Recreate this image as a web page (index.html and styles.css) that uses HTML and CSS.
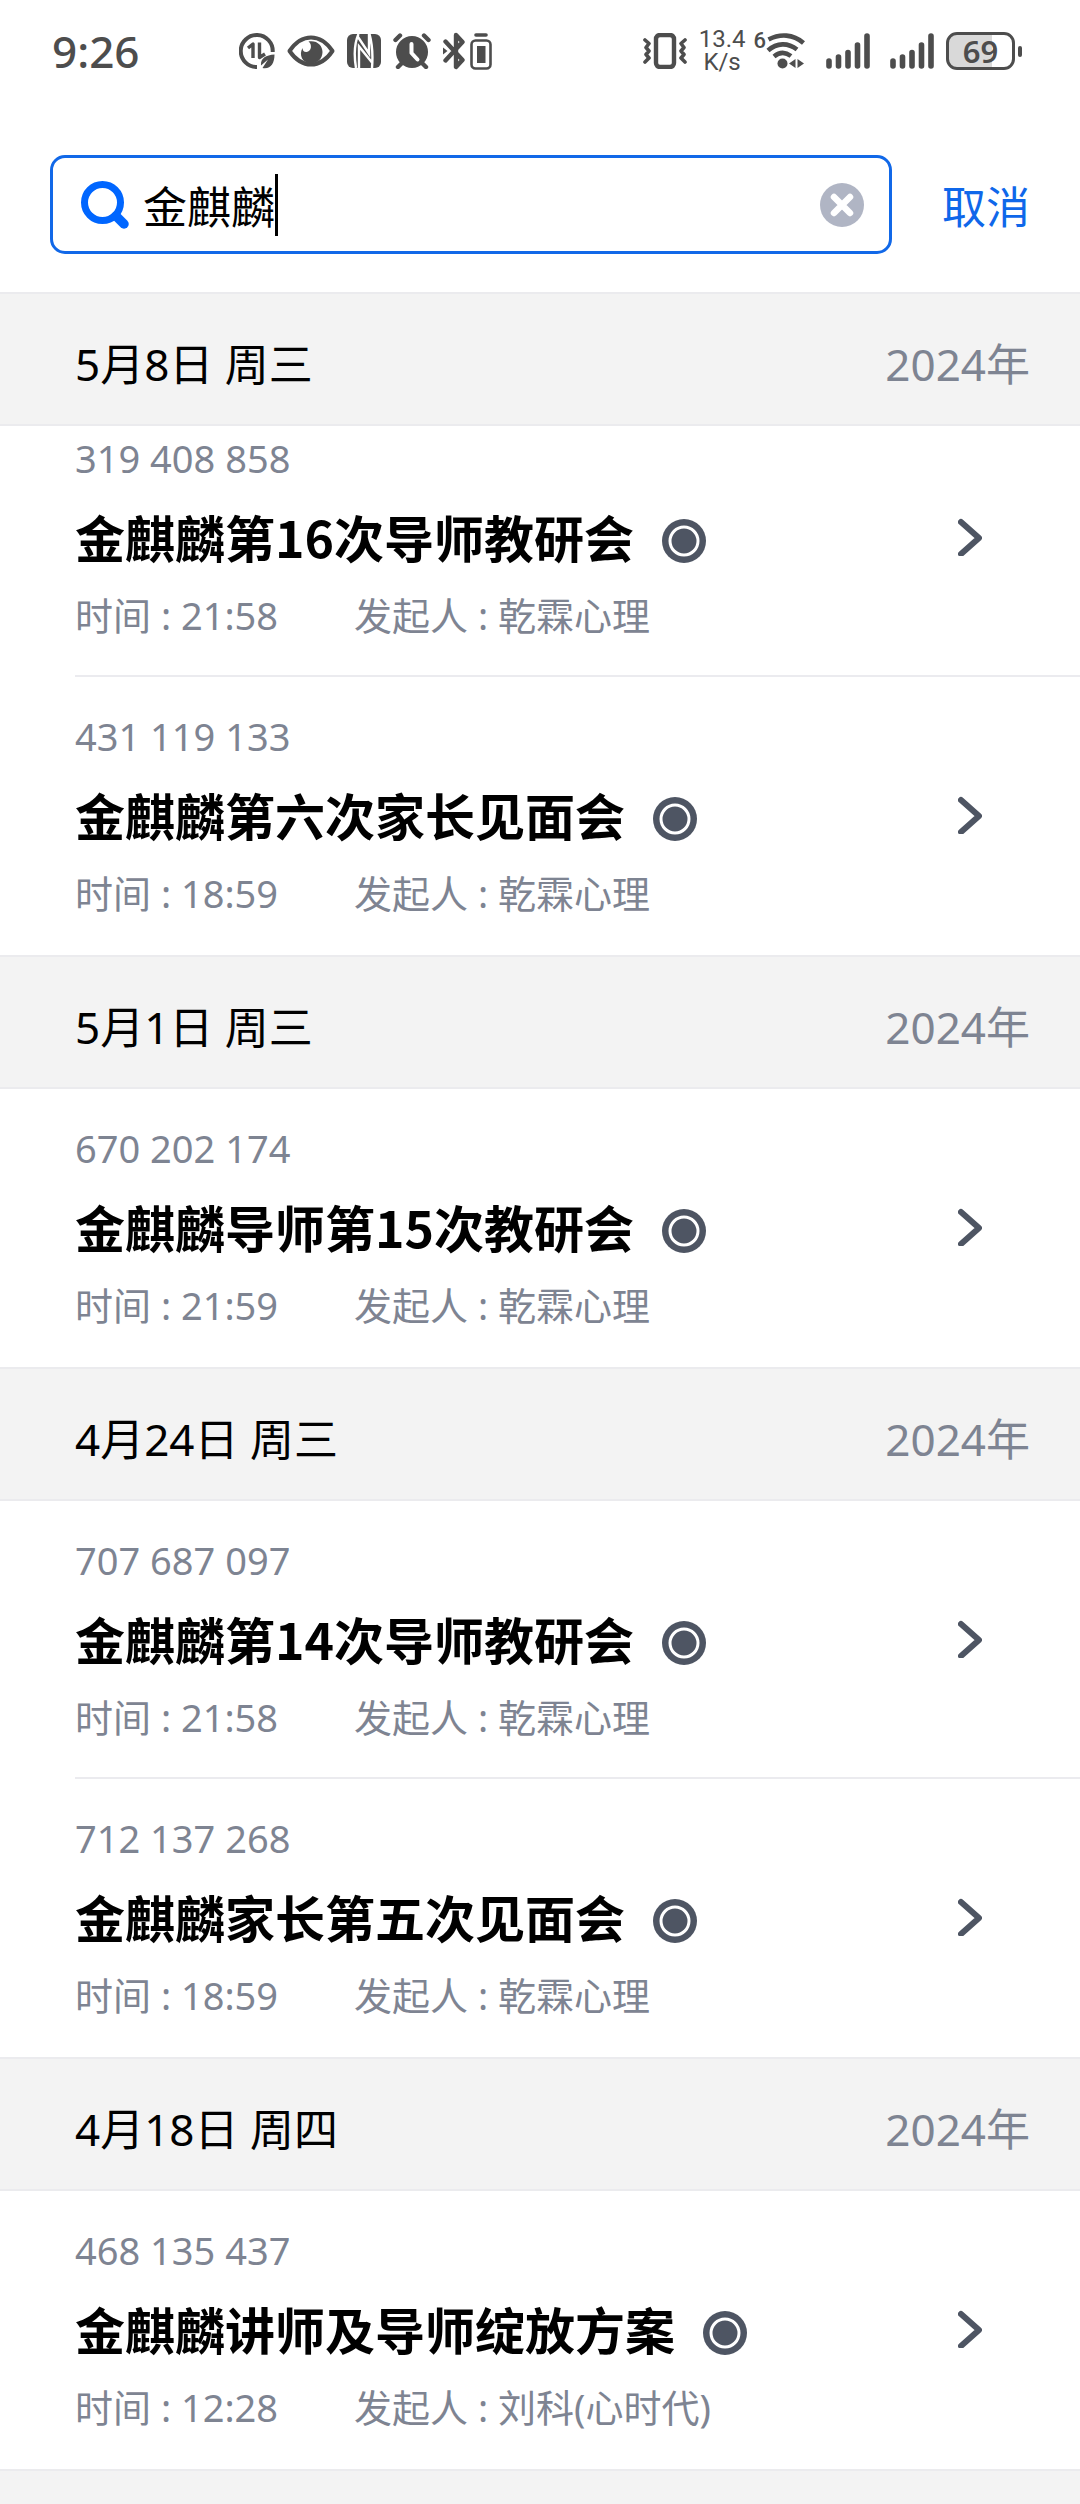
FILE: index.html
```html
<!DOCTYPE html>
<html lang="zh-CN">
<head>
    <meta charset="UTF-8">
    <meta name="viewport" content="width=device-width, initial-scale=1">
    <title>搜索会议</title>
    <link rel="stylesheet" href="styles.css">
</head>
<body>
    <!-- shared icons -->
    <svg class="sprite" aria-hidden="true">
        <symbol id="icon-signal" viewBox="0 0 44 36">
            <path d="M3 28v5M12.500 24v9M22 19.500v13.500M31.500 12v21M41 3v30" fill="none" stroke="currentColor" stroke-width="5.600" stroke-linecap="round"/>
        </symbol>
        <symbol id="icon-record" viewBox="0 0 44 44">
            <circle cx="22" cy="22" r="22" fill="currentColor"/>
            <circle cx="22" cy="22" r="14" fill="none" stroke="#fff" stroke-width="3"/>
        </symbol>
        <symbol id="icon-chevron" viewBox="0 0 24 38">
            <path d="M3 4l18 16L3 36" fill="none" stroke="currentColor" stroke-width="6" stroke-linecap="round" stroke-linejoin="round"/>
        </symbol>
    </svg>

    <div class="status-bar">
        <div class="status-left">
            <span class="clock">9:26</span>
            <!-- data saver -->
            <svg width="36" height="36" viewBox="0 0 36 36">
                <path d="M33.700 19A16 16 0 1 0 18 34" fill="none" stroke="currentColor" stroke-width="4"/>
                <path d="M9 15l5-4v14M20.500 9.500v15l5.500-3.500" fill="none" stroke="currentColor" stroke-width="3.400" stroke-linejoin="round"/>
                <path d="M35.500 21.500c-9 .5-14 4-13.500 11l7-6-5.500 8.500c8 1.500 12-4.500 12-13.500z" fill="currentColor"/>
            </svg>
            <!-- eye comfort -->
            <svg width="48" height="32" viewBox="0 0 48 32">
                <path d="M2.500 16C8 8 15 2.500 24 2.500S40 8 45.500 16C40 24 33 29.500 24 29.500S8 24 2.500 16z" fill="none" stroke="currentColor" stroke-width="4" stroke-linejoin="round"/>
                <path d="M21.500 6.500c4 3 3 10-2 10.500-2.500.2-4-1.500-4-4-4 7 0 15 8 15.500 7 .2 12-5 12-11.500S30 5 21.500 6.500z" fill="currentColor"/>
            </svg>
            <!-- NFC -->
            <svg width="34" height="34" viewBox="0 0 34 34">
                <rect width="34" height="34" rx="6" fill="currentColor"/>
                <path d="M11.500 0C7.500 9 7 22 9 34M12 34V12.500l13 16M22 0v19.500L11 3M22.500 0c2.500 9 3.500 22 2.500 34" fill="none" stroke="#fff" stroke-width="2.400"/>
            </svg>
            <!-- alarm -->
            <svg width="38" height="36" viewBox="0 0 38 36">
                <circle cx="19" cy="19" r="16" fill="currentColor"/>
                <path d="M2.500 7L7 2.500M35.500 7L31 2.500M9 30l-4 4M29 30l4 4" stroke="currentColor" stroke-width="4.400" stroke-linecap="round"/>
                <path d="M18.500 11v9l6 6.500" fill="none" stroke="#fff" stroke-width="4" stroke-linecap="round" stroke-linejoin="round"/>
            </svg>
            <!-- bluetooth with device battery -->
            <svg width="50" height="38" viewBox="0 0 50 38">
                <path d="M2.500 9.500l17 18.500-6.500 7v-32l6.500 7-17 18.500" fill="none" stroke="currentColor" stroke-width="4.400" stroke-linecap="round" stroke-linejoin="round"/>
                <path d="M0 15.500l4.500 3.500L0 22.500z" fill="currentColor"/>
                <rect x="28.500" y="8.500" width="19" height="28" rx="4" fill="none" stroke="currentColor" stroke-width="2.600"/>
                <rect x="34" y="14" width="8.500" height="17" fill="currentColor"/>
                <path d="M33 3h10" stroke="currentColor" stroke-width="3.600" stroke-linecap="round"/>
            </svg>
        </div>
        <div class="status-right">
            <!-- vibrate -->
            <svg width="44" height="36" viewBox="0 0 44 36">
                <rect x="13" y="2" width="18" height="32" rx="4" fill="none" stroke="currentColor" stroke-width="4.400"/>
                <path d="M2 7l4 3.500-3 4L6 18l-3 3.500L6 25l-4 4M42 7l-4 3.500 3 4-3 3.500 3 3.500-3 3.500 4 4" fill="none" stroke="currentColor" stroke-width="3.600" stroke-linecap="round" stroke-linejoin="round"/>
            </svg>
            <div class="net-speed">
                <div>13.4</div>
                <div>K/s</div>
            </div>
            <div class="wifi">
                <span class="wifi-gen">6</span>
                <svg width="40" height="36" viewBox="0 0 40 36">
                    <path d="M2.500 6.500C14 .5 27 1 37.500 10M2 17.500c9-8 20-8 29-1M8 23.500c5.500-4.500 11.500-4.500 17-.5" fill="none" stroke="currentColor" stroke-width="4.600"/>
                    <circle cx="16.500" cy="30.500" r="5" fill="currentColor"/>
                    <path d="M29.500 26v9l-6.500-4.500zM31.500 26v9l6.500-4.500z" fill="currentColor"/>
                </svg>
            </div>
            <svg class="signal" width="44" height="36"><use href="#icon-signal"/></svg>
            <svg class="signal" width="44" height="36"><use href="#icon-signal"/></svg>
            <div class="battery"><span class="battery-body">69</span></div>
        </div>
    </div>

    <form class="search-bar" role="search">
        <div class="search-box">
            <svg width="48" height="48" viewBox="0 0 48 48" aria-hidden="true">
                <circle cx="21.500" cy="21.500" r="18" fill="none" stroke="currentColor" stroke-width="7"/>
                <path d="M35 35l8 8" stroke="currentColor" stroke-width="9.500" stroke-linecap="round"/>
            </svg>
            <div class="search-field">
                <input type="text" class="search-input" aria-label="搜索" value="金麒麟">
                <span class="caret"></span>
            </div>
            <button type="reset" class="clear" aria-label="清除">
                <svg width="44" height="44" viewBox="0 0 44 44">
                    <circle cx="22" cy="22" r="22" fill="currentColor"/>
                    <path d="M14 14l16 16M30 14L14 30" stroke="#fff" stroke-width="6.500" stroke-linecap="round"/>
                </svg>
            </button>
        </div>
        <button type="button" class="cancel">取消</button>
    </form>

    <main class="results">
        <section>
            <h2 class="day-header"><span>5月8日 周三</span><span class="year">2024年</span></h2>
            <ul class="meetings scrolled">
                <li>
                    <a href="#319408858" class="meeting">
                        <div class="info">
                            <div class="number">319 408 858</div>
                            <div class="title">金麒麟第16次导师教研会<svg class="record" width="44" height="44"><use href="#icon-record"/></svg></div>
                            <div class="meta"><span>时间 : 21:58</span><span>发起人 : 乾霖心理</span></div>
                        </div>
                        <svg class="chevron" width="24" height="38"><use href="#icon-chevron"/></svg>
                    </a>
                </li>
                <li>
                    <a href="#431119133" class="meeting">
                        <div class="info">
                            <div class="number">431 119 133</div>
                            <div class="title">金麒麟第六次家长见面会<svg class="record" width="44" height="44"><use href="#icon-record"/></svg></div>
                            <div class="meta"><span>时间 : 18:59</span><span>发起人 : 乾霖心理</span></div>
                        </div>
                        <svg class="chevron" width="24" height="38"><use href="#icon-chevron"/></svg>
                    </a>
                </li>
            </ul>
        </section>

        <section>
            <h2 class="day-header"><span>5月1日 周三</span><span class="year">2024年</span></h2>
            <ul class="meetings">
                <li>
                    <a href="#670202174" class="meeting">
                        <div class="info">
                            <div class="number">670 202 174</div>
                            <div class="title">金麒麟导师第15次教研会<svg class="record" width="44" height="44"><use href="#icon-record"/></svg></div>
                            <div class="meta"><span>时间 : 21:59</span><span>发起人 : 乾霖心理</span></div>
                        </div>
                        <svg class="chevron" width="24" height="38"><use href="#icon-chevron"/></svg>
                    </a>
                </li>
            </ul>
        </section>

        <section>
            <h2 class="day-header"><span>4月24日 周三</span><span class="year">2024年</span></h2>
            <ul class="meetings">
                <li>
                    <a href="#707687097" class="meeting">
                        <div class="info">
                            <div class="number">707 687 097</div>
                            <div class="title">金麒麟第14次导师教研会<svg class="record" width="44" height="44"><use href="#icon-record"/></svg></div>
                            <div class="meta"><span>时间 : 21:58</span><span>发起人 : 乾霖心理</span></div>
                        </div>
                        <svg class="chevron" width="24" height="38"><use href="#icon-chevron"/></svg>
                    </a>
                </li>
                <li>
                    <a href="#712137268" class="meeting">
                        <div class="info">
                            <div class="number">712 137 268</div>
                            <div class="title">金麒麟家长第五次见面会<svg class="record" width="44" height="44"><use href="#icon-record"/></svg></div>
                            <div class="meta"><span>时间 : 18:59</span><span>发起人 : 乾霖心理</span></div>
                        </div>
                        <svg class="chevron" width="24" height="38"><use href="#icon-chevron"/></svg>
                    </a>
                </li>
            </ul>
        </section>

        <section>
            <h2 class="day-header"><span>4月18日 周四</span><span class="year">2024年</span></h2>
            <ul class="meetings">
                <li>
                    <a href="#468135437" class="meeting">
                        <div class="info">
                            <div class="number">468 135 437</div>
                            <div class="title">金麒麟讲师及导师绽放方案<svg class="record" width="44" height="44"><use href="#icon-record"/></svg></div>
                            <div class="meta"><span>时间 : 12:28</span><span>发起人 : 刘科(心时代)</span></div>
                        </div>
                        <svg class="chevron" width="24" height="38"><use href="#icon-chevron"/></svg>
                    </a>
                </li>
            </ul>
        </section>
        <div class="list-end"></div>
    </main>
</body>
</html>
```

FILE: styles.css
```css
* {
    box-sizing: border-box;
}
body {
    margin: 0;
    min-height: 100vh;
    display: flex;
    flex-direction: column;
    background: #fff;
    color: #000;
    font-family: "Noto Sans", "Noto Sans CJK SC", sans-serif;
}
svg {
    display: block;
    flex: none;
}
button {
    padding: 0;
    border: none;
    background: none;
    font: inherit;
    cursor: pointer;
}
.sprite {
    position: absolute;
    width: 0;
    height: 0;
}

/* status bar */
.status-bar {
    display: flex;
    justify-content: space-between;
    align-items: center;
    height: 102px;
    padding: 0 58px 0 52px;
    color: #4d4d4d;
}
.status-left,
.status-right {
    display: flex;
    align-items: center;
    gap: 12px;
}
.clock {
    margin-right: 88px;
    font-size: 44px;
    font-weight: 500;
    line-height: 56px;
}
.net-speed {
    font-family: Roboto, sans-serif;
    font-size: 24px;
    line-height: 23px;
    text-align: center;
}
.wifi {
    display: flex;
    margin-left: -4px;
}
.wifi-gen {
    font-family: Roboto, sans-serif;
    font-size: 22px;
    font-weight: 500;
    line-height: 16px;
}
.signal {
    margin-left: 8px;
}
.battery {
    display: flex;
    align-items: center;
    gap: 3px;
}
.battery::after {
    content: "";
    width: 4px;
    height: 11px;
    border-radius: 2px;
    background: #4d4d4d;
}
.battery-body {
    width: 69px;
    height: 38px;
    border: 3px solid #4d4d4d;
    border-radius: 11px;
    background: linear-gradient(to right, #d9d9d9 69%, #fff 69%);
    font-size: 31px;
    font-weight: 600;
    line-height: 32px;
    text-align: center;
}

/* search */
.search-bar {
    display: flex;
    align-items: center;
    gap: 50px;
    padding: 53px 50px 38px;
    font-size: 44px;
}
.search-box {
    flex: 1;
    display: flex;
    align-items: center;
    gap: 14px;
    height: 99px;
    padding: 0 25px 0 28px;
    border: 3px solid #1168e8;
    border-radius: 15px;
    color: #06f;
}
.search-field {
    position: relative;
    flex: 1;
}
.search-input {
    display: block;
    width: 100%;
    height: 62px;
    padding: 0;
    border: none;
    outline: none;
    background: none;
    font: inherit;
    color: #000;
}
.caret {
    position: absolute;
    top: 0;
    left: 3em;
    width: 3px;
    height: 100%;
    background: #000;
}
.clear {
    color: #b0b5c4;
}
.cancel {
    color: #0f67ea;
}

/* results */
.results {
    flex: 1;
    display: flex;
    flex-direction: column;
}
.day-header {
    position: relative;
    z-index: 1;
    display: flex;
    justify-content: space-between;
    margin: 0;
    padding: 40px 50px 30px 75px;
    border: solid #ebebee;
    border-width: 2px 0;
    background: #f3f3f3;
    font-size: 44px;
    font-weight: 400;
    line-height: 60px;
}
.year {
    color: #7e8492;
}
.meetings {
    margin: 0;
    padding: 0 0 0 75px;
    list-style: none;
}
/* first row is partly scrolled under its day header */
.scrolled {
    margin-top: -27px;
}
.meetings li {
    border-bottom: 2px solid #ebebef;
}
.meetings li:last-child {
    border-bottom-color: transparent;
}
.meeting {
    display: flex;
    align-items: center;
    justify-content: space-between;
    padding-right: 98px;
    color: inherit;
    text-decoration: none;
}
.info {
    padding: 39px 0 40px;
}
.number,
.meta {
    color: #7e8492;
    font-size: 38px;
    line-height: 40px;
}
.title {
    display: flex;
    align-items: flex-end;
    gap: 28px;
    margin: 31px 0 32px;
    font-family: "Noto Sans CJK SC", sans-serif;
    font-size: 50px;
    font-weight: 700;
    line-height: 54px;
}
.meta {
    display: flex;
    gap: 76px;
}
.record,
.chevron {
    color: #4e5563;
}
.list-end {
    flex: 1;
    border-top: 2px solid #ebebee;
    background: #f3f3f3;
}
```
